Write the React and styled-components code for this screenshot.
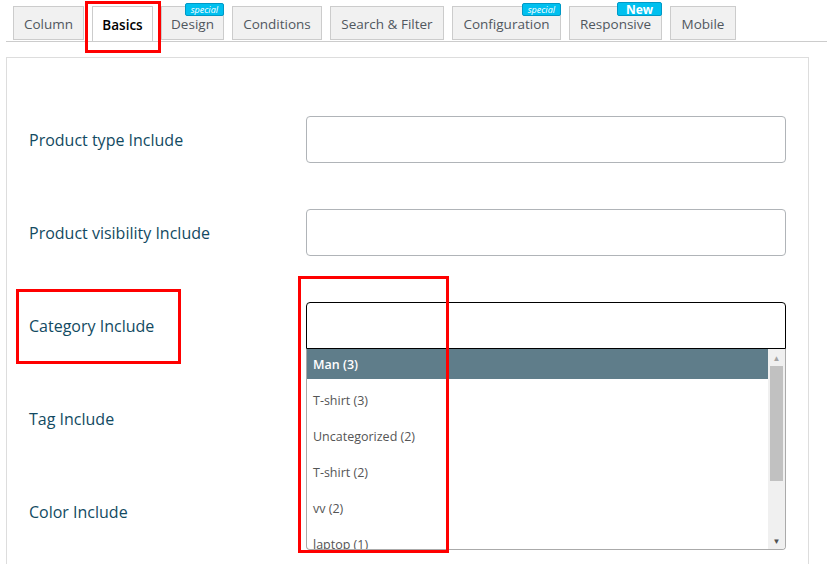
import React from 'react'
import styled, {createGlobalStyle} from 'styled-components'

const GlobalStyle = createGlobalStyle`
    body {
        margin: 0;
        background: #fff;
        font-family: 'Open Sans', 'Noto Sans', sans-serif;
    }
`

const tabs = [
    {name: 'Column', w: 71},
    {name: 'Basics', w: 61, active: true},
    {name: 'Design', w: 63, badge: 'special'},
    {name: 'Conditions', w: 90},
    {name: 'Search & Filter', w: 114},
    {name: 'Configuration', w: 109, badge: 'special'},
    {name: 'Responsive', w: 93, badge: 'New'},
    {name: 'Mobile', w: 66},
]

const fields = ['Product type Include', 'Product visibility Include', 'Category Include', 'Tag Include', 'Color Include']

const options = ['Man (3)', 'T-shirt (3)', 'Uncategorized (2)', 'T-shirt (2)', 'vv (2)', 'laptop (1)']

export default function App(){
    return (
        <Page>
            <GlobalStyle />
            <TabBar>
                {tabs.map(t => (
                    <Tab key={t.name} active={t.active} style={{width: t.w}}>
                        <TabText>{t.name}</TabText>
                        {t.badge && <Badge isNew={t.badge === 'New'}>{t.badge}</Badge>}
                    </Tab>
                ))}
            </TabBar>
            <Panel>
                {fields.map(f => (
                    <Row key={f}>
                        <Label>{f}</Label>
                        <Field>
                            {f === 'Category Include' ? (
                                <>
                                    <OpenInput />
                                    <Dropdown>
                                        <OptionList>
                                            {options.map((o, i) => (
                                                <Option key={i} active={i === 0}>{o}</Option>
                                            ))}
                                        </OptionList>
                                        <Scrollbar>
                                            <Arrow>▲</Arrow>
                                            <Track><Thumb /></Track>
                                            <Arrow>▼</Arrow>
                                        </Scrollbar>
                                    </Dropdown>
                                </>
                            ) : <Input />}
                        </Field>
                    </Row>
                ))}
            </Panel>
            <Mark style={{left: 85, top: 1, width: 70, height: 46}} />
            <Mark style={{left: 16, top: 289, width: 159, height: 69}} />
            <Mark style={{left: 298, top: 276, width: 145, height: 271}} />
        </Page>
    )
}

const Page = styled.div`
    position: relative;
    width: 834px;
    height: 564px;
    overflow: hidden;
`
const TabBar = styled.div`
    display: flex;
    gap: 8px;
    margin: 0 7px 0 6px;
    padding: 6px 0 0 7px;
    border-bottom: 1px solid #ccc;
    height: 35px;
`
const Tab = styled.div`
    position: relative;
    height: ${p => p.active ? '35px' : '34px'};
    padding-top: 3px;
    display: flex;
    align-items: center;
    justify-content: center;
    font-size: 13.5px;
    color: ${p => p.active ? '#000' : '#50575e'};
    font-weight: ${p => p.active ? 600 : 400};
    background: ${p => p.active ? '#fff' : '#f1f1f1'};
    border: 1px solid #ccc;
    border-bottom: ${p => p.active ? 'none' : '1px solid #ccc'};
    margin-bottom: ${p => p.active ? '-1px' : '0'};
    box-sizing: border-box;
    white-space: nowrap;
`
const TabText = styled.span`
    line-height: 15px;
`
const Badge = styled.span`
    position: absolute;
    top: ${p => p.isNew ? '-5px' : '-4px'};
    right: -1px;
    background: #00c0ef;
    color: #fff;
    border: 1px solid #0099c6;
    border-radius: 2px;
    font-size: ${p => p.isNew ? '12px' : '9px'};
    font-weight: ${p => p.isNew ? 700 : 400};
    font-style: ${p => p.isNew ? 'normal' : 'italic'};
    line-height: ${p => p.isNew ? '11px' : '9px'};
    padding: ${p => p.isNew ? '1px 8px 0' : '1px 5px'};
`
const Panel = styled.div`
    margin: 15px 25px 0 6px;
    border: 1px solid #ddd;
    border-bottom: none;
    padding: 35px 22px 0 22px;
    height: 600px;
`
const Row = styled.div`
    display: flex;
    align-items: center;
    height: 93px;
`
const Label = styled.div`
    width: 277px;
    font-size: 16px;
    color: #124a62;
`
const Field = styled.div`
    position: relative;
    flex: 1;
`
const Input = styled.div`
    height: 47px;
    border: 1px solid #b0b4b8;
    border-radius: 4px;
    box-sizing: border-box;
`
const OpenInput = styled(Input)`
    border-color: #000;
    border-radius: 4px 4px 0 0;
`
const Dropdown = styled.div`
    position: absolute;
    left: 0;
    right: 0;
    top: 47px;
    height: 200px;
    border: 1px solid #aaa;
    border-top: none;
    border-radius: 0 0 4px 4px;
    background: #fff;
    display: flex;
    overflow: hidden;
    z-index: 2;
`
const OptionList = styled.div`
    flex: 1;
`
const Option = styled.div`
    height: 30px;
    margin-bottom: 6px;
    padding: 0 6px;
    display: flex;
    align-items: center;
    font-size: 12.5px;
    color: ${p => p.active ? '#fff' : '#555'};
    font-weight: ${p => p.active ? 600 : 400};
    background: ${p => p.active ? '#5f7d8a' : 'transparent'};
`
const Scrollbar = styled.div`
    width: 17px;
    background: #f0f0f0;
    display: flex;
    flex-direction: column;
`
const Arrow = styled.div`
    height: 17px;
    font-size: 8px;
    color: #a3a3a3;
    display: flex;
    align-items: center;
    justify-content: center;
    &:last-child { color: #505050; }
`
const Track = styled.div`
    flex: 1;
    padding: 0 2px;
`
const Thumb = styled.div`
    height: 115px;
    background: #c1c1c1;
`
const Mark = styled.div`
    position: absolute;
    border: 3px solid #f00;
    z-index: 5;
`
